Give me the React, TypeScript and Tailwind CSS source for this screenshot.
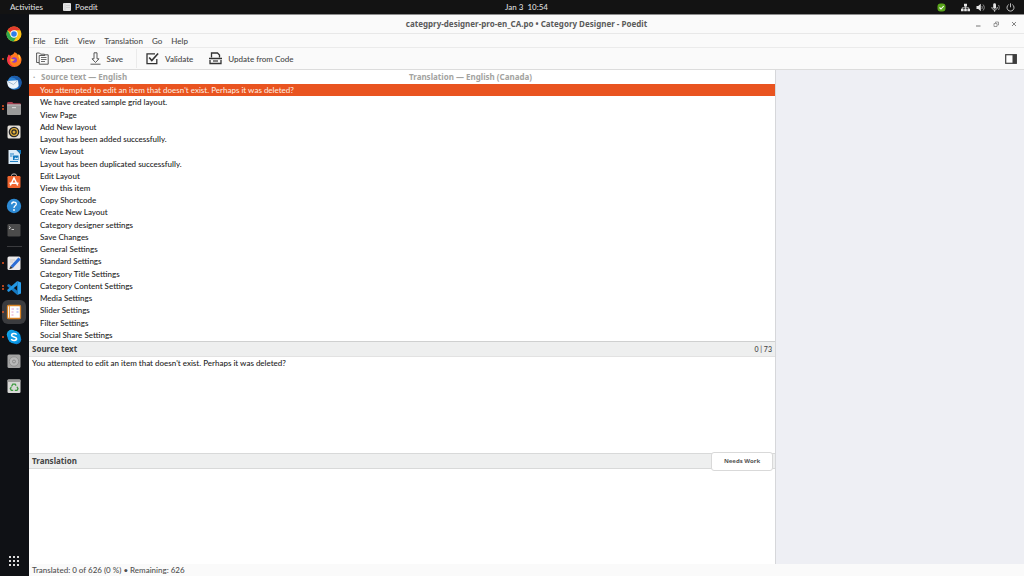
import React from 'react';

const messages = [
  "You attempted to edit an item that doesn't exist. Perhaps it was deleted?",
  'We have created sample grid layout.',
  'View Page',
  'Add New layout',
  'Layout has been added successfully.',
  'View Layout',
  'Layout has been duplicated successfully.',
  'Edit Layout',
  'View this item',
  'Copy Shortcode',
  'Create New Layout',
  'Category designer settings',
  'Save Changes',
  'General Settings',
  'Standard Settings',
  'Category Title Settings',
  'Category Content Settings',
  'Media Settings',
  'Slider Settings',
  'Filter Settings',
  'Social Share Settings',
];

const menus = ['File', 'Edit', 'View', 'Translation', 'Go', 'Help'];

function Svg({ size = 'size-4', box = 16, children }: { size?: string; box?: number; children: React.ReactNode }) {
  return (
    <svg className={`${size} shrink-0`} viewBox={`0 0 ${box} ${box}`} fill="none" aria-hidden="true">
      {children}
    </svg>
  );
}

const chrome = (
  <Svg>
    <circle cx="8" cy="8" r="7.5" fill="#fbc116" />
    <path d="M8 8 1.5 4.2A7.5 7.5 0 0 1 14.5 4.3H8Z" fill="#e33b2e" />
    <path d="M1.5 4.2A7.5 7.5 0 0 0 7.6 15.5L11.2 9.8 8 8 4.8 9.8Z" fill="#2da94f" />
    <circle cx="8" cy="8" r="3.7" fill="#fff" />
    <circle cx="8" cy="8" r="2.8" fill="#2f7de9" />
  </Svg>
);

const firefox = (
  <Svg>
    <path d="M8.6 1C10 2 11.6 3 12 4.5c.6-.3.6-1 .5-1.5 2 1.6 3 3.7 3 6A7 6.8 0 0 1 1.2 9c0-2 .6-3.8 1.8-5.5.1.8.3 1.2.8 1.5C5 4 7.5 4 8.6 1Z" fill="#ff7a1f" />
    <path d="M9 1c1.5 1.2 3 3 3.6 4.8.5 1.5 1.4 2.2 1 4.2 1-1.5 1-5-1-7 .2 1 0 1.5-.5 1.5C11.6 3 10 2 9 1Z" fill="#ffd43b" />
    <path d="M3 3.5c-1.6 2-2.3 5-1.3 7.5C3 14.5 6 15.7 8.5 15.7c-3-1-5-2.7-5-6.2 0-2 1-3 2-4C4.2 5.3 3.3 4.5 3 3.5Z" fill="#f5304e" />
    <circle cx="8.2" cy="9" r="2.8" fill="#8a3fc8" />
    <path d="M4.8 8.2c1.4-.9 2.8.4 4.2.2-1 1.5-2.6 1.3-3.2 2.6-.8-.8-1.1-1.8-1-2.8Z" fill="#ffb02e" />
  </Svg>
);

const thunderbird = (
  <Svg>
    <circle cx="8.5" cy="7.8" r="7" fill="#2a80d4" />
    <path d="M4 2.5C7 0 13 .8 15 4.5c1.5 4 0 8.5-3.5 10 1.5-3 1.5-6 0-8.5C9.5 3 7 2 4 2.5Z" fill="#1c5aa8" />
    <path d="M.8 6 12 5.2l.6 5.8C10 14.5 4.5 14.5 2 11Z" fill="#edf3f9" />
    <path d="m.8 6 6.7 3.6L12 5.2" stroke="#9fb7cf" strokeWidth=".9" />
  </Svg>
);

const files = (
  <Svg>
    <path d="M1 3.5C1 2.6 1.5 2 2.4 2h3.8l1.3 1.3h6.1c.9 0 1.4.6 1.4 1.4V7H1Z" fill="#a8404f" />
    <rect x="1" y="4.5" width="14" height="10.5" rx="1" fill="#9a9a9a" />
    <rect x="1" y="4.5" width="14" height="1" fill="#b9b9b9" />
    <rect x="6" y="7" width="4" height="1.2" fill="#d4d4d4" />
  </Svg>
);

const rhythmbox = (
  <Svg>
    <rect x="1.5" y="1.5" width="13" height="13" rx="1.5" fill="#e3dfd8" />
    <circle cx="8" cy="8" r="5.3" fill="#28282b" />
    <circle cx="8" cy="8" r="3.4" stroke="#e2b038" strokeWidth="1.2" />
    <circle cx="8" cy="8" r="1.5" fill="#e2b038" />
  </Svg>
);

const writer = (
  <Svg>
    <path d="M2.5 1h8l3.5 3.5V15H2.5Z" fill="#dcecf8" />
    <path d="M10.5 1 15 5.5V1Z" fill="#1279be" />
    <path d="M4 5h4M4 7h2.5M4 12.5h8" stroke="#2282c6" strokeWidth="1.2" />
    <path d="M7 6.5h5.5v4.5H7Z" fill="#1279be" />
    <path d="m8 10.3 1.5-2 1 1 1-1 .8 2Z" fill="#d9ecfa" />
  </Svg>
);

const software = (
  <Svg>
    <path d="M5.5 4V2.5A2.5 1.6 0 0 1 10.5 2.5V4" stroke="#c8c0bb" strokeWidth="1" />
    <rect x="1.5" y="3" width="13" height="12" rx="1.3" fill="#f0652f" />
    <path d="M4.3 12.5 8 5l3.7 7.5M3.5 10.3h9" stroke="#fff" strokeWidth="1.5" />
  </Svg>
);

const help = (
  <Svg>
    <circle cx="8" cy="8" r="7.2" fill="#2d8ad4" />
    <path d="M5.7 6.2c.1-3 4.8-2.8 4.6 0C10.2 7.9 8 7.9 8 9.9" stroke="#fff" strokeWidth="1.3" />
    <circle cx="8" cy="12" r=".9" fill="#fff" />
  </Svg>
);

const terminal = (
  <Svg>
    <rect x="1.5" y="2" width="13" height="12.5" rx="1.3" fill="#4b4b4b" />
    <path d="m3 4.5 1.6 1.2L3 6.9M5.5 7.5H8" stroke="#d8d8d8" strokeWidth=".9" />
  </Svg>
);

const textEditor = (
  <Svg>
    <rect x="1.5" y="1.5" width="13" height="13.5" rx="1.5" fill="#eceaea" />
    <path d="M4 5h5M4 7h3" stroke="#c9c9c9" />
    <path d="m4.6 11 7.8-8.5 2.3 2-7.9 8.4Z" fill="#2c6ed5" />
    <path d="m4.6 11 2.2 1.9-3.6 1.3Z" fill="#333" />
  </Svg>
);

const vscode = (
  <Svg>
    <path d="M11.3 1 15 2.6v10.8L11.3 15Z" fill="#2ba0ee" />
    <path d="m1.3 5 1.4-1 8.6 6.8V15L1.3 6.2Z" fill="#1479c2" />
    <path d="m1.3 11 1.4 1 8.6-6.8V1L1.3 9.8Z" fill="#2196e3" />
  </Svg>
);

const poedit = (
  <Svg>
    <rect x="1.5" y="1.5" width="13" height="13" rx="1" fill="#fff" stroke="#d98324" strokeWidth="1.3" />
    <path d="M3.5 2v12" stroke="#e8a04f" strokeWidth="1" />
    <path d="M5.5 5H8M5.5 8h2M5.5 11h2" stroke="#e3a0cc" />
    <path d="M10.5 5h2M10.5 8h2" stroke="#9aa6f2" />
  </Svg>
);

const skype = (
  <Svg>
    <circle cx="5.5" cy="5.5" r="4.7" fill="#12a5e8" />
    <circle cx="10.5" cy="10.5" r="4.7" fill="#0b86d6" />
    <circle cx="8" cy="8" r="6.5" fill="#0d9be6" />
    <path d="M10.6 5.8C9.8 4 5.6 4.2 5.6 6.2c0 2.2 5 1.2 5 3.6 0 2.1-4.6 2.2-5.3.2" stroke="#fff" strokeWidth="1.6" />
  </Svg>
);

const disk = (
  <Svg>
    <rect x="1.5" y="1.5" width="13" height="13.5" rx="1.5" fill="#a3a3a3" />
    <circle cx="8" cy="8.5" r="4.7" fill="#b9b9b9" stroke="#8b8b8b" strokeWidth=".8" />
    <circle cx="8" cy="8.5" r="1.5" stroke="#7f7f7f" strokeWidth=".8" />
  </Svg>
);

const trash = (
  <Svg>
    <rect x="1.5" y="1.5" width="13" height="13.5" rx="1.3" fill="#d8d8d6" />
    <rect x="1.5" y="1.5" width="13" height="2.5" rx="1" fill="#9d9d9b" />
    <path d="m5.5 8.5 1.3-2.3h2.4l.9 1.4M11 8.8l1 2-1 1.5H8.8M7.2 12.3H5.3l-1-1.7 1-1.5" stroke="#3f9b41" strokeWidth="1.3" />
  </Svg>
);

const pinned = [
  { name: 'Google Chrome', icon: chrome, windows: 0 },
  { name: 'Firefox', icon: firefox, windows: 1 },
  { name: 'Thunderbird', icon: thunderbird, windows: 0 },
  { name: 'Files', icon: files, windows: 2 },
  { name: 'Rhythmbox', icon: rhythmbox, windows: 0 },
  { name: 'LibreOffice Writer', icon: writer, windows: 0 },
  { name: 'Ubuntu Software', icon: software, windows: 0 },
  { name: 'Help', icon: help, windows: 0 },
  { name: 'Terminal', icon: terminal, windows: 0 },
];

const running = [
  { name: 'Text Editor', icon: textEditor, windows: 1 },
  { name: 'Visual Studio Code', icon: vscode, windows: 2 },
  { name: 'Poedit', icon: poedit, windows: 1, active: true },
  { name: 'Skype', icon: skype, windows: 1 },
  { name: 'Disk', icon: disk, windows: 0 },
  { name: 'Trash', icon: trash, windows: 0 },
];

type App = { name: string; icon: React.ReactNode; windows: number; active?: boolean };

function DockItem({ app }: { app: App }) {
  return (
    <button
      aria-label={app.name}
      className={`relative flex size-6 items-center justify-center rounded-md ${app.active ? 'bg-[#3b3c3f]' : ''}`}
    >
      <span className="absolute inset-y-0 left-0 flex flex-col justify-center gap-px">
        {Array.from({ length: app.windows }, (_, i) => (
          <span key={i} className="size-[2px] rounded-full bg-[#e95420]" />
        ))}
      </span>
      {app.icon}
    </button>
  );
}

function TopBar() {
  return (
    <header className="grid h-[14px] shrink-0 grid-cols-[29px_1fr_auto_1fr] items-center bg-[#131313] text-[#dedede]">
      <div className="col-span-2 flex items-center pl-[10px]">
        <button className="w-[53px] text-left">Activities</button>
        <button className="flex items-center gap-1">
          <Svg size="size-2" box={8}>
            <rect width="8" height="8" rx="1" fill="#e4e4e4" />
            <path d="M2 0v8M3 2.5h4M3 4.5h4" stroke="#bdbdbd" strokeWidth=".5" />
          </Svg>
          Poedit
        </button>
      </div>
      <button className="whitespace-pre">Jan 3  10:54</button>
      <div className="flex items-center justify-end pr-[9px]">
        <span className="mr-[15px] flex">
          <Svg size="size-[9px]" box={9}>
            <rect x=".5" y=".5" width="8" height="8" rx="3" fill="#5aa51b" />
            <path d="m2.5 4.5 1.5 1.5 2.7-3" stroke="#fff" strokeWidth="1.1" />
          </Svg>
        </span>
        <div className="flex items-center gap-[6px]">
          <Svg size="size-[9px]" box={9}>
            <path d="M3 .8h3v2.7H3ZM0 5.8h2.6v2.4H0ZM3.2 5.8h2.6v2.4H3.2ZM6.4 5.8H9v2.4H6.4Z" fill="#e6e6e6" />
            <path d="M4.5 3v3M1.3 6V4.7h6.4V6" stroke="#e6e6e6" strokeWidth=".7" />
          </Svg>
          <Svg size="size-[9px]" box={9}>
            <path d="M.5 3h1.7L4.8.8v7.4L2.2 6H.5Z" fill="#e6e6e6" />
            <path d="M5.7 3c.8.8.8 2.2 0 3M7 1.5c1.7 1.8 1.7 4.2 0 6" stroke="#aaa" strokeWidth=".8" />
          </Svg>
          <Svg size="size-[9px]" box={9}>
            <rect x="2.2" y=".3" width="2.8" height="5.5" rx="1.4" fill="#e6e6e6" />
            <path d="M.9 4c0 4 5.4 4 5.4 0M3.6 7v1.8" stroke="#e6e6e6" strokeWidth=".8" />
            <path d="M7.5 2c1 1.5 1 3.5 0 5" stroke="#aaa" strokeWidth=".8" />
          </Svg>
          <Svg size="size-[9px]" box={9}>
            <path d="M2.7 1.6a3.5 3.5 0 1 0 3.6 0M4.5.3v4" stroke="#d0d0d0" strokeWidth=".9" />
          </Svg>
        </div>
      </div>
    </header>
  );
}

function Dock() {
  return (
    <nav className="flex w-[29px] shrink-0 flex-col items-center bg-[#0f1115] pt-2 pr-px">
      <div className="flex h-[220px] flex-col justify-between">
        {pinned.map((app) => (
          <DockItem key={app.name} app={app} />
        ))}
      </div>
      <hr className="my-1 w-[15px] border-[#3a3b3e]" />
      <div className="flex h-[147px] flex-col justify-between">
        {running.map((app) => (
          <DockItem key={app.name} app={app} />
        ))}
      </div>
      <button aria-label="Show Applications" className="mt-auto mb-[10px]">
        <span className="grid grid-cols-3 gap-[2px]">
          {Array.from({ length: 9 }, (_, i) => (
            <span key={i} className="size-[2px] bg-[#dcdcdc]" />
          ))}
        </span>
      </button>
    </nav>
  );
}

function TitleBar() {
  return (
    <div className="relative flex h-5 items-center justify-center border-t border-b border-t-[#8d8d8d] border-b-[#e8e8e8] bg-[#fafafa]">
      <h1 className="font-['Noto_Sans',sans-serif] font-bold text-[#5a5a5a]">
        categpry-designer-pro-en_CA.po • Category Designer - Poedit
      </h1>
      <div className="absolute right-[6px] flex gap-[10px] text-[#777]">
        <button aria-label="Minimize">
          <Svg size="size-2" box={8}>
            <path d="M2 6h4.5" stroke="currentColor" />
          </Svg>
        </button>
        <button aria-label="Restore">
          <Svg size="size-2" box={8}>
            <path d="M2 3.5h3v3H2ZM3.5 3V2h3v3h-1" stroke="currentColor" strokeWidth=".7" />
          </Svg>
        </button>
        <button aria-label="Close">
          <Svg size="size-2" box={8}>
            <path d="m2 2 4 4M6 2 2 6" stroke="currentColor" strokeWidth=".9" />
          </Svg>
        </button>
      </div>
    </div>
  );
}

function Toolbar() {
  return (
    <div className="flex h-[22px] items-center border-b border-[#dcdcdc] bg-[#fafafa] px-[7px] text-[#454545]">
      <button className="flex items-center gap-[6px]">
        <Svg size="size-[13px]" box={13}>
          <path d="M3 10.5H.6V1h3l1 1.2h3.8V3.5" stroke="#484848" strokeWidth=".9" />
          <path d="M3.2 3.5h5.5V2.8h3.5v9.4h-9Z" stroke="#484848" strokeWidth=".9" />
          <path d="M5 5.5h5.5M5 7.5h5.5M5 9.5h4" stroke="#484848" strokeWidth=".8" />
        </Svg>
        Open
      </button>
      <button className="ml-[14px] flex items-center gap-[5px]">
        <Svg size="size-[13px]" box={13}>
          <path d="M5 .8h3v6h2L6.5 10.5 3 6.8h2Z" stroke="#484848" strokeWidth=".9" />
          <path d="M1.5 12.2h10" stroke="#484848" strokeWidth=".9" />
        </Svg>
        Save
      </button>
      <div className="mr-[9px] ml-[13px] h-[19px] w-px bg-[#ebebeb]" />
      <button className="flex items-center gap-[6px]">
        <Svg size="size-[13px]" box={13}>
          <path d="M9 1.8H1v9.9h9.8V7" stroke="#333" strokeWidth="1.3" />
          <path d="m3.2 5.5 2.6 3 6.3-7" stroke="#333" strokeWidth="1.6" />
        </Svg>
        Validate
      </button>
      <button className="ml-4 flex items-center gap-[6px]">
        <Svg size="size-[13px]" box={13}>
          <path d="M2.5 5.5V1h6L10.5 3v2.5" stroke="#333" strokeWidth="1.3" />
          <path d="M0 6.5h13" stroke="#333" strokeWidth="1.5" />
          <path d="M1 8v3.500h11V8" stroke="#333" strokeWidth="1.3" />
          <path d="M4 9h5" stroke="#333" strokeWidth="1.2" />
        </Svg>
        Update from Code
      </button>
      <button aria-label="Toggle sidebar" className="ml-auto">
        <Svg size="size-3" box={12}>
          <rect x=".7" y="1.7" width="10.6" height="8.6" fill="#fff" stroke="#3c3c3c" strokeWidth="1.2" />
          <rect x="7.5" y="1.5" width="4" height="9" fill="#3c3c3c" />
        </Svg>
      </button>
    </div>
  );
}

function MessageTable() {
  return (
    <div className="min-h-0 flex-1 overflow-hidden">
      <table className="h-full w-full table-fixed border-collapse text-left">
        <colgroup>
          <col className="w-2" />
          <col />
          <col />
        </colgroup>
        <thead className="font-['Noto_Sans',sans-serif]">
          <tr className="h-[14px] text-[#a3a3a0]">
            <th className="p-0 pl-1 leading-3">·</th>
            <th className="p-0 pl-1 leading-3 font-bold">Source text — English</th>
            <th className="p-0 pl-[3px] leading-3 font-bold">Translation — English (Canada)</th>
          </tr>
        </thead>
        <tbody>
          {messages.map((text, i) => (
            <tr key={text} className={i === 0 ? 'bg-[#e95420] text-[#fde8df]' : 'text-[#1c1c1c]'}>
              <td className="p-0" />
              <td className="p-0 pl-[3px] leading-3 whitespace-nowrap">{text}</td>
              <td className="p-0" />
            </tr>
          ))}
        </tbody>
      </table>
    </div>
  );
}

export default function App() {
  return (
    <div className="flex h-screen flex-col overflow-hidden bg-white font-['Lato','Noto_Sans',sans-serif] text-[8px] leading-3 font-medium">
      <TopBar />
      <div className="flex min-h-0 flex-1">
        <Dock />
        <main className="flex min-w-0 flex-1 flex-col">
          <TitleBar />
          <nav className="flex h-[14px] items-center gap-[9px] border-b border-[#ebebeb] bg-[#fafafa] pl-1 text-[#4a4a4a]">
            {menus.map((menu) => (
              <button key={menu}>{menu}</button>
            ))}
          </nav>
          <Toolbar />
          <div className="flex min-h-0 flex-1">
            <div className="flex min-w-0 flex-1 flex-col border-r border-[#d6d7da]">
              <MessageTable />
              <section className="flex h-28 flex-col">
                <div className="flex h-4 items-center justify-between border-t border-b border-t-[#cfd0d0] border-b-[#e2e2e2] bg-[#eeefef] px-[3px] text-[#444]">
                  <h2 className="font-['Noto_Sans',sans-serif] font-bold">Source text</h2>
                  <span className="text-[7px]">0 | 73</span>
                </div>
                <p className="px-[3px] text-[#1c1c1c]">{messages[0]}</p>
              </section>
              <section className="flex h-[111px] flex-col">
                <div className="flex h-4 items-center justify-between border-t border-b border-[#d8d9d9] bg-[#eeefef] pr-[2px] pl-[3px] font-['Noto_Sans',sans-serif] font-bold text-[#444]">
                  <label htmlFor="translation">Translation</label>
                  <button className="z-10 h-[19px] w-[62px] shrink-0 rounded-[3px] border border-[#d9d9d9] bg-white text-[6px] text-[#555]">
                    Needs Work
                  </button>
                </div>
                <textarea id="translation" className="w-full flex-1 resize-none p-[3px] outline-none" />
              </section>
            </div>
            <aside className="w-62 shrink-0 bg-[#eeeff4]" />
          </div>
          <footer className="h-3 shrink-0 bg-[#fafafa] pl-[3px] text-[#505050]">
            Translated: 0 of 626 (0 %) • Remaining: 626
          </footer>
        </main>
      </div>
    </div>
  );
}
